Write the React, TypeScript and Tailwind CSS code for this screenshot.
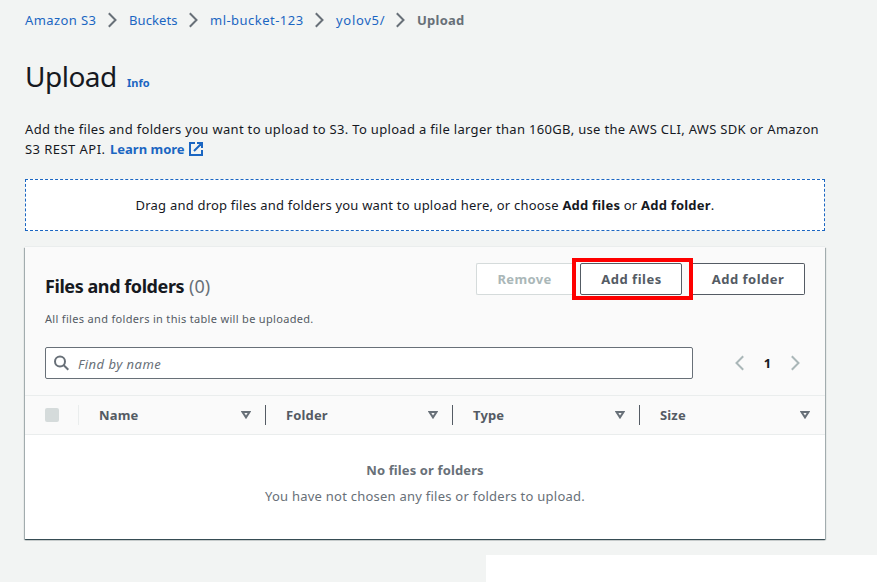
import React from "react";

function Chevron({ left = false, className = "text-[#687078]" }: { left?: boolean; className?: string }) {
  return (
    <svg width="9" height="16" viewBox="0 0 9 16" fill="none" stroke="currentColor" strokeWidth="2" className={className}>
      <path d={left ? "M8.2 1.2 1.5 8l6.7 6.8" : "M.8 1.2 7.5 8 .8 14.8"} />
    </svg>
  );
}

function Crumb({ children, className }: { children: React.ReactNode; className: string }) {
  return (
    <>
      <a className={`${className} text-[#1b66c2]`}>{children}</a>
      <span className="flex w-8 pl-[11px]">
        <Chevron />
      </span>
    </>
  );
}

function SortIcon() {
  return (
    <svg width="10" height="8" viewBox="0 0 10 8" fill="none" stroke="#687078" strokeWidth="2">
      <path d="M1.5 1h7L5 6.4z" />
    </svg>
  );
}

function Column({ label, width, last = false }: { label: string; width: string; last?: boolean }) {
  return (
    <div className={`flex h-5 items-center justify-between pl-5 ${last ? "pr-[15px]" : "border-r border-[#545b64] pr-[14px]"} ${width}`}>
      <span className="tracking-[0.15px]">{label}</span>
      <SortIcon />
    </div>
  );
}

export default function App() {
  return (
    <div className="relative h-[582px] w-[877px] overflow-hidden bg-[#f2f4f3] pl-[25px] font-['Noto_Sans','Open_Sans',sans-serif] text-[13px] leading-5 whitespace-nowrap text-[#16191f]">
      <nav className="flex h-[40px] items-center">
        <Crumb className="w-[72px] tracking-[0.4px]">Amazon S3</Crumb>
        <Crumb className="w-[49px] tracking-[0.1px]">Buckets</Crumb>
        <Crumb className="w-[94px] tracking-[0.47px]">ml-bucket-123</Crumb>
        <Crumb className="w-[49px] tracking-[0.7px]">yolov5/</Crumb>
        <span className="font-bold tracking-[0.25px] text-[#687078]">Upload</span>
      </nav>

      <header className="mt-[18px] flex h-9 items-baseline">
        <h1 className="w-[102px] text-[28px] leading-9 tracking-[-0.5px]">Upload</h1>
        <a className="text-[11px] font-bold text-[#1b66c2]">Info</a>
      </header>

      <div className="mt-[25px]">
        <p className="tracking-[0.319px]">Add the files and folders you want to upload to S3. To upload a file larger than 160GB, use the AWS CLI, AWS SDK or Amazon</p>
        <p className="flex items-center">
          <span className="w-[85px] tracking-[0.45px]">S3 REST API.</span>
          <a className="w-[79px] font-bold text-[#1b66c2]">Learn more</a>
          <svg width="14" height="14" viewBox="0 0 14 14" fill="none" stroke="#1b66c2" strokeWidth="2">
            <path d="M6 1H1v12h12V8M8 1h5v5M13 1 5 9" />
          </svg>
        </p>
      </div>

      <div className="mt-5 flex h-[52px] w-[800px] items-center justify-center border border-dashed border-[#1b66c2] bg-white">
        <p className="tracking-[0.21px]">
          Drag and drop files and folders you want to upload here, or choose <b>Add files</b> or <b>Add folder</b>.
        </p>
      </div>

      <section className="mt-4 h-[292px] w-[800px] bg-white shadow-[0_-1px_0_0_#eaeded,0_1px_1px_0_rgba(0,28,36,0.6),1px_1px_1px_0_rgba(0,28,36,0.25),-1px_1px_1px_0_rgba(0,28,36,0.25)]">
        <div className="h-[188px] border-b border-[#eaeded] bg-[#fafafa]">
          <div className="flex h-[149px] flex-col border-b border-[#eaeded] px-5 pt-4">
            <div className="flex justify-between">
              <div>
                <h2 className="mt-[13px] flex h-5 gap-[5px] text-[18px]">
                  <span className="font-bold tracking-[-0.43px]">Files and folders</span>
                  <span className="text-[#687078]">(0)</span>
                </h2>
                <p className="mt-[13px] text-[11px] tracking-[0.32px] text-[#545b64]">All files and folders in this table will be uploaded.</p>
              </div>
              <div className="flex h-8 font-bold tracking-[0.5px] text-[#545b64]">
                <button className="w-24 rounded-l-[2px] border border-r-0 border-[#d5dbdb] bg-white tracking-[0.35px] text-[#aab7b8]">Remove</button>
                <div className="-mt-[5px] flex h-[42px] w-[121px] border-4 border-[#fe0000] pt-px pl-1">
                  <button className="h-8 w-[102px] rounded-[2px] border border-[#545b64] bg-white pl-px">Add files</button>
                </div>
                <button className="w-[112px] rounded-r-[2px] border border-l-0 border-[#545b64] bg-white pr-px">Add folder</button>
              </div>
            </div>
            <div className="mt-[18px] flex h-8">
              <div className="flex w-[648px] items-center rounded-[2px] border border-[#687078] bg-white pl-[7px] text-[#687078]">
                <svg width="16" height="16" viewBox="0 0 16 16" fill="none" stroke="currentColor" strokeWidth="2">
                  <circle cx="7" cy="6.5" r="5" />
                  <path d="m10.5 10 4.8 4.8" />
                </svg>
                <span className="mt-0.5 ml-[9px] tracking-[0.48px] italic">Find by name</span>
              </div>
              <div className="flex flex-1 items-center justify-between pr-[5px] pl-[42px]">
                <Chevron left className="text-[#aab7b8]" />
                <b>1</b>
                <Chevron className="text-[#aab7b8]" />
              </div>
            </div>
          </div>
          <div className="flex h-[38px] items-center pl-5 font-bold text-[#545b64]">
            <span className="h-[14px] w-[14px] rounded-[2px] bg-[#d5dbdb]" />
            <span className="ml-[19px] h-5 w-px bg-[#eaeded]" />
            <Column label="Name" width="w-[187px]" />
            <Column label="Folder" width="w-[187px]" />
            <Column label="Type" width="w-[187px]" />
            <Column label="Size" width="w-[185px]" last />
          </div>
        </div>
        <div className="pt-[25px] text-center text-[#687078]">
          <p className="font-bold tracking-[0.12px]">No files or folders</p>
          <p className="mt-1.5 tracking-[0.24px]">You have not chosen any files or folders to upload.</p>
        </div>
      </section>

      <div className="absolute top-[555px] left-[486px] h-[27px] w-[391px] bg-white" />
    </div>
  );
}
